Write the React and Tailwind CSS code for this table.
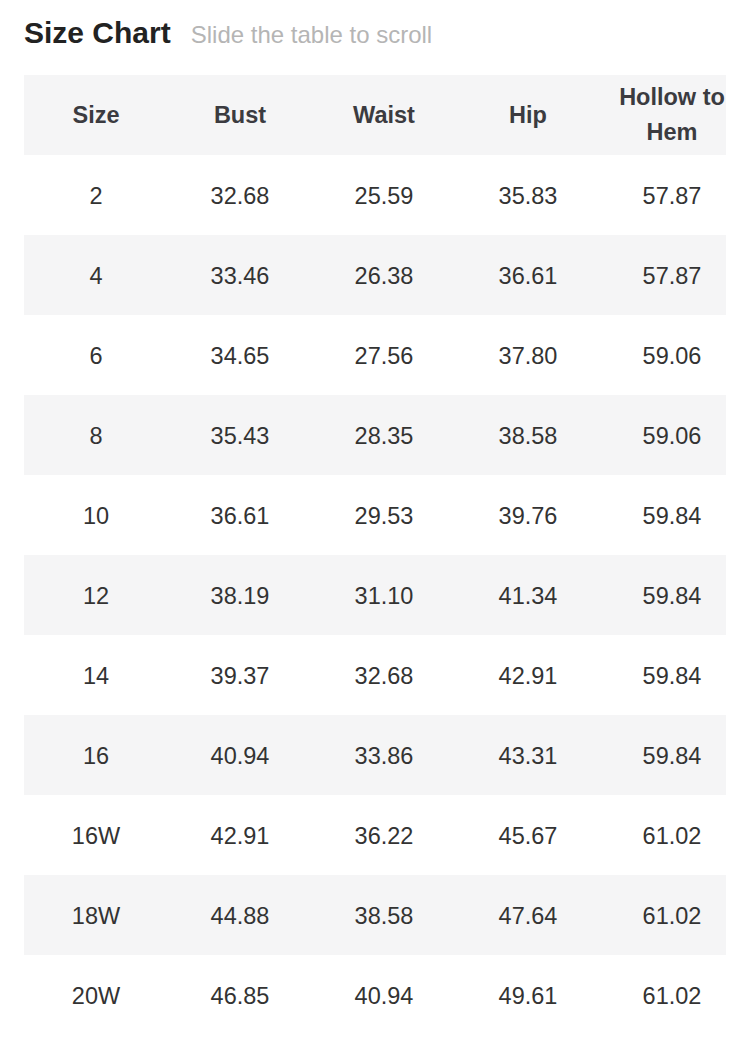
const header = ["Size", "Bust", "Waist", "Hip", "Hollow to Hem"];

const rows = [
  ["2", "32.68", "25.59", "35.83", "57.87"],
  ["4", "33.46", "26.38", "36.61", "57.87"],
  ["6", "34.65", "27.56", "37.80", "59.06"],
  ["8", "35.43", "28.35", "38.58", "59.06"],
  ["10", "36.61", "29.53", "39.76", "59.84"],
  ["12", "38.19", "31.10", "41.34", "59.84"],
  ["14", "39.37", "32.68", "42.91", "59.84"],
  ["16", "40.94", "33.86", "43.31", "59.84"],
  ["16W", "42.91", "36.22", "45.67", "61.02"],
  ["18W", "44.88", "38.58", "47.64", "61.02"],
  ["20W", "46.85", "40.94", "49.61", "61.02"],
];

const App = () => {
  return (
    <div className="bg-white min-h-[1046px] font-['Liberation_Sans',Arial,sans-serif]">
      <div className="flex items-baseline gap-5 px-6 pt-[14px] h-[75px]">
        <h1 className="text-[30px] font-bold text-[#222] leading-[38px]">Size Chart</h1>
        <span className="text-[24px] text-[#b5b5b5]">Slide the table to scroll</span>
      </div>

      <div className="mx-6 w-[702px] overflow-hidden">
        <div className="w-[720px]">
          <div className="grid grid-cols-[144px_144px_144px_144px_144px] h-20 bg-[#f5f5f6] items-center">
            {header.map((h) => (
              <div
                key={h}
                className="text-center text-[23.5px] font-bold text-[#3b3b40] leading-[35px] px-4"
              >
                {h}
              </div>
            ))}
          </div>
          {rows.map((row, i) => (
            <div
              key={row[0]}
              className={
                "grid grid-cols-[144px_144px_144px_144px_144px] h-20 items-center " +
                (i % 2 === 1 ? "bg-[#f5f5f6]" : "bg-white")
              }
            >
              {row.map((cell, j) => (
                <div key={j} className="text-center text-[23.5px] text-[#333] pt-1">
                  {cell}
                </div>
              ))}
            </div>
          ))}
        </div>
      </div>
    </div>
  );
};

export default App;
